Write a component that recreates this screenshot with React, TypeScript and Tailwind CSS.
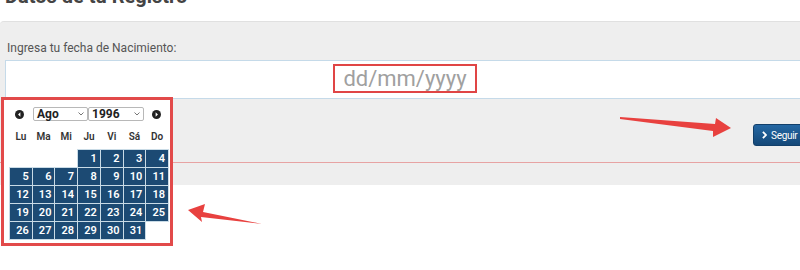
const days: (number | null)[] = [
	null, null, null, 1, 2, 3, 4,
	5, 6, 7, 8, 9, 10, 11,
	12, 13, 14, 15, 16, 17, 18,
	19, 20, 21, 22, 23, 24, 25,
	26, 27, 28, 29, 30, 31, null,
];

const weekDays = ["Lu", "Ma", "Mi", "Ju", "Vi", "Sá", "Do"];

const NavIcon = ({ dir }: { dir: "prev" | "next" }) => (
	<svg width="9" height="9" viewBox="0 0 10 10">
		<circle cx="5" cy="5" r="5" fill="#222" />
		{dir === "prev" ? (
			<path d="M6 2.6 L3.4 5 L6 7.4 Z" fill="#fff" />
		) : (
			<path d="M4 2.6 L6.6 5 L4 7.4 Z" fill="#fff" />
		)}
	</svg>
);

const FakeSelect = ({ value, width }: { value: string; width: string }) => (
	<div
		className={`flex items-center justify-between h-[14px] ${width} px-[3px] bg-white border border-[#b8b8b8] rounded-[2px] text-[12px] font-bold text-[#222] leading-none`}
	>
		<span>{value}</span>
		<svg width="6" height="4" viewBox="0 0 6 4">
			<path d="M0.5 0.5 L3 3 L5.5 0.5" fill="none" stroke="#666" strokeWidth="0.9" />
		</svg>
	</div>
);

const Calendar = () => (
	<div className="absolute left-[1px] top-[97px] w-[172px] h-[149px] bg-white border-[3px] border-[#e24a4a] pt-[7px] pl-[6px]">
		<div className="flex items-center h-[14px]">
			<div className="w-[22px] flex justify-center -ml-[2px]">
				<NavIcon dir="prev" />
			</div>
			<div className="ml-[3px] flex">
				<FakeSelect value="Ago" width="w-[55px]" />
				<FakeSelect value="1996" width="w-[56px]" />
			</div>
			<div className="w-[20px] flex justify-center ml-[2px]">
				<NavIcon dir="next" />
			</div>
		</div>
		<div className="grid grid-cols-7 w-[158px] gap-x-[1px] mt-[10px] h-[12px]">
			{weekDays.map((d) => (
				<span key={d} className="text-center text-[10px] font-semibold text-[#333] leading-[12px]">
					{d}
				</span>
			))}
		</div>
		<div className="grid grid-cols-7 w-[158px] gap-[1px] mt-[7px]">
			{days.map((d, i) =>
				d ? (
					<div
						key={i}
						className="h-[17px] bg-[#1c4a73] text-white text-[11px] font-semibold text-right pr-[3px] leading-[17px] outline outline-1 outline-[#c9dbe6]"
					>
						{d}
					</div>
				) : (
					<div key={i} className="h-[17px]" />
				),
			)}
		</div>
	</div>
);

const Arrows = () => (
	<svg className="absolute left-0 top-0 pointer-events-none" width="800" height="270">
		<polygon
			points="620,117 715,124 716,118 731,128 713,137 713,131 620,119"
			fill="#e8413f"
		/>
		<polygon
			points="188,210 205,204 203,212 262,224 201,217 202,222"
			fill="#e8413f"
		/>
	</svg>
);

export default function App() {
	return (
		<div className="relative w-[800px] h-[270px] bg-white overflow-hidden font-['Roboto',sans-serif]">
			<div className="h-[21px] overflow-hidden pl-[5px]">
				<p className="-mt-[14px] text-[20px] leading-[20px] text-[#444] font-bold">
					Datos de tu Registro
				</p>
			</div>
			<div className="w-[812px] h-[164px] bg-[#eeeeee] border-t border-[#e0e0e0] rounded-tl-[4px] pt-[19px]">
				<p className="pl-[7px] text-[12px] leading-[14px] text-[#555]">
					Ingresa tu fecha de Nacimiento:
				</p>
				<div className="ml-[5px] mt-[5px] w-[800px] h-[39px] bg-white border border-[#c5dae9] flex items-center justify-center">
					<span className="border-2 border-[#e04545] h-[29px] px-[8px] text-[22px] leading-[24px] text-[#a0a0a0] flex items-center -mt-[2px]">
						dd/mm/yyyy
					</span>
				</div>
				<div className="flex mt-[25px] pl-[753px]">
					<button className="h-[22px] w-[56px] rounded-[3px] bg-gradient-to-b from-[#2467a3] to-[#144878] border border-[#123f6a] text-white text-[10px] tracking-[-0.3px] flex items-center pl-[8px] gap-[4px]">
						<svg width="5" height="8" viewBox="0 0 5 8">
							<path d="M0.9 0.8 L3.9 4 L0.9 7.2" fill="none" stroke="#fff" strokeWidth="1.8" />
						</svg>
						Seguir
					</button>
				</div>
				<div className="mt-[16px] h-px bg-[#e7a3a3]" />
			</div>
			<Calendar />
			<Arrows />
		</div>
	);
}
